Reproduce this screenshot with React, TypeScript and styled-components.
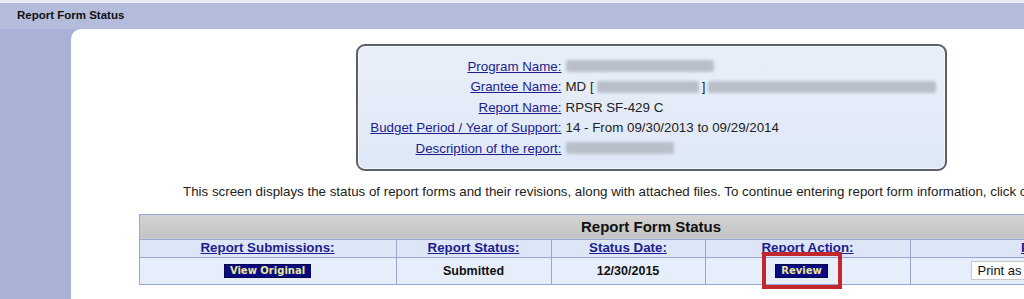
import React from "react";
import styled, { createGlobalStyle } from "styled-components";

const Global = createGlobalStyle`
  html, body { margin: 0; padding: 0; }
  body {
    width: 1024px;
    height: 299px;
    overflow: hidden;
    background: #aab3d7;
    font-family: "Liberation Sans", Arial, sans-serif;
  }
`;

const Page = styled.div`
  display: flex;
  flex-direction: column;
  height: 299px;
  border-top: 3px solid #e9ecf6;
  box-sizing: border-box;
`;

const TitleBar = styled.div`
  height: 26px;
  display: flex;
  align-items: center;
  padding-left: 17px;
  padding-bottom: 2px;
  box-sizing: border-box;
  background: #b4bcdc;
  font-size: 11.5px;
  font-weight: bold;
  color: #111;
`;

const Main = styled.div`
  flex: 1;
  display: flex;
  min-height: 0;
`;

const Sidebar = styled.div`
  width: 71px;
  flex-shrink: 0;
  background: #a9b2d6;
`;

const Panel = styled.div`
  flex: 1;
  background: #fff;
  border-top-left-radius: 10px;
  overflow: hidden;
  padding: 15px 0 0 68px;
`;

const Content = styled.div`
  width: 1024px;
  display: flex;
  flex-direction: column;
  align-items: center;
`;

const InfoBox = styled.div`
  width: 591px;
  box-sizing: border-box;
  border: 2px solid #5b5f68;
  border-radius: 9px;
  box-shadow: inset 0 0 0 1px #f4f7fc;
  background: linear-gradient(#e9eff9, #dfe8f7);
  padding: 10px 0;
  display: grid;
  grid-template-columns: 204px 1fr;
  grid-auto-rows: 20.5px;
  column-gap: 4px;
  align-items: center;
  font-size: 13.33px;
  color: #222;
`;

const Label = styled.a`
  text-align: right;
  color: #1d1d8e;
  text-decoration: underline;
  white-space: nowrap;
`;

const Value = styled.div`
  display: flex;
  align-items: center;
  gap: 3px;
  white-space: nowrap;
`;

const Blur = styled.span<{ $w: number }>`
  display: inline-block;
  width: ${(p) => p.$w}px;
  height: 12px;
  background: #b9bfc9;
  border-radius: 3px;
  filter: blur(1.5px);
`;

const Intro = styled.p`
  align-self: stretch;
  margin: 13px 0 0;
  padding-left: 44px;
  white-space: nowrap;
  font-size: 13.33px;
  line-height: 16px;
  color: #222;
`;

const Table = styled.table`
  width: 1024px;
  margin-top: 14px;
  border-collapse: collapse;
  table-layout: fixed;
  border: 1px solid #9aa5d6;
  font-size: 13.33px;
`;

const Caption = styled.th`
  height: 24px;
  padding: 0;
  background: linear-gradient(#d3d3d3, #c3c3c3);
  font-size: 15px;
  font-weight: bold;
  color: #111;
  text-align: center;
  border-bottom: 1px solid #9aa5d6;
`;

const HeadCell = styled.th`
  height: 17px;
  padding: 0;
  background: #dde6f6;
  border: 1px solid #9aa5d6;
  font-weight: bold;
  text-align: center;
  line-height: 16px;
`;

const HeadLink = styled.a`
  color: #1d1d8e;
  text-decoration: underline;
`;

const Cell = styled.td`
  height: 26px;
  padding: 0;
  background: #e6eefb;
  border: 1px solid #9aa5d6;
  text-align: center;
  font-weight: bold;
  font-size: 12.5px;
  color: #111;
`;

const NavyButton = styled.button`
  font-family: "DejaVu Sans", Verdana, sans-serif;
  font-size: 10px;
  font-weight: bold;
  color: #e7e796;
  background: #0a0a82;
  border: 1px solid #06064a;
  padding: 0 5px;
  height: 14px;
  line-height: 12px;
  cursor: pointer;
`;

const Highlight = styled.span`
  position: relative;
  display: inline-block;
  margin-right: 12px;
`;

const RedBox = styled.span`
  position: absolute;
  top: -11px;
  bottom: -11px;
  left: -13px;
  right: -14px;
  border: 4px solid #c1272d;
  pointer-events: none;
`;

const Select = styled.select`
  width: 132px;
  height: 19px;
  font-family: "Liberation Sans", Arial, sans-serif;
  font-size: 13px;
  background: #fff;
  border: 1px solid #c8c8c8;
  color: #111;
  padding: 0 2px;
`;

const rows: { label: string; value: React.ReactNode }[] = [
  { label: "Program Name:", value: <Blur $w={148} /> },
  {
    label: "Grantee Name:",
    value: (
      <>
        MD [ <Blur $w={102} /> ] <Blur $w={228} />
      </>
    ),
  },
  { label: "Report Name:", value: "RPSR SF-429 C" },
  {
    label: "Budget Period / Year of Support:",
    value: "14 - From 09/30/2013 to 09/29/2014",
  },
  { label: "Description of the report:", value: <Blur $w={108} /> },
];

export default function App() {
  return (
    <>
      <Global />
      <Page>
        <TitleBar>Report Form Status</TitleBar>
        <Main>
          <Sidebar />
          <Panel>
            <Content>
              <InfoBox>
                {rows.map((r) => (
                  <React.Fragment key={r.label}>
                    <Label>{r.label}</Label>
                    <Value>{r.value}</Value>
                  </React.Fragment>
                ))}
              </InfoBox>
              <Intro>
                This screen displays the status of report forms and their revisions, along with
                attached files. To continue entering report form information, click on the
                appropriate button.
              </Intro>
              <Table>
                <colgroup>
                  <col style={{ width: 257 }} />
                  <col style={{ width: 155 }} />
                  <col style={{ width: 154 }} />
                  <col style={{ width: 205 }} />
                  <col style={{ width: 253 }} />
                </colgroup>
                <thead>
                  <tr>
                    <Caption colSpan={5}>Report Form Status</Caption>
                  </tr>
                  <tr>
                    <HeadCell><HeadLink>Report Submissions:</HeadLink></HeadCell>
                    <HeadCell><HeadLink>Report Status:</HeadLink></HeadCell>
                    <HeadCell><HeadLink>Status Date:</HeadLink></HeadCell>
                    <HeadCell><HeadLink>Report Action:</HeadLink></HeadCell>
                    <HeadCell><HeadLink>PDF:</HeadLink></HeadCell>
                  </tr>
                </thead>
                <tbody>
                  <tr>
                    <Cell><NavyButton>View Original</NavyButton></Cell>
                    <Cell>Submitted</Cell>
                    <Cell>12/30/2015</Cell>
                    <Cell>
                      <Highlight>
                        <NavyButton>Review</NavyButton>
                        <RedBox />
                      </Highlight>
                    </Cell>
                    <Cell>
                      <Select defaultValue="pdf">
                        <option value="pdf">Print as PDF</option>
                      </Select>
                    </Cell>
                  </tr>
                </tbody>
              </Table>
            </Content>
          </Panel>
        </Main>
      </Page>
    </>
  );
}
